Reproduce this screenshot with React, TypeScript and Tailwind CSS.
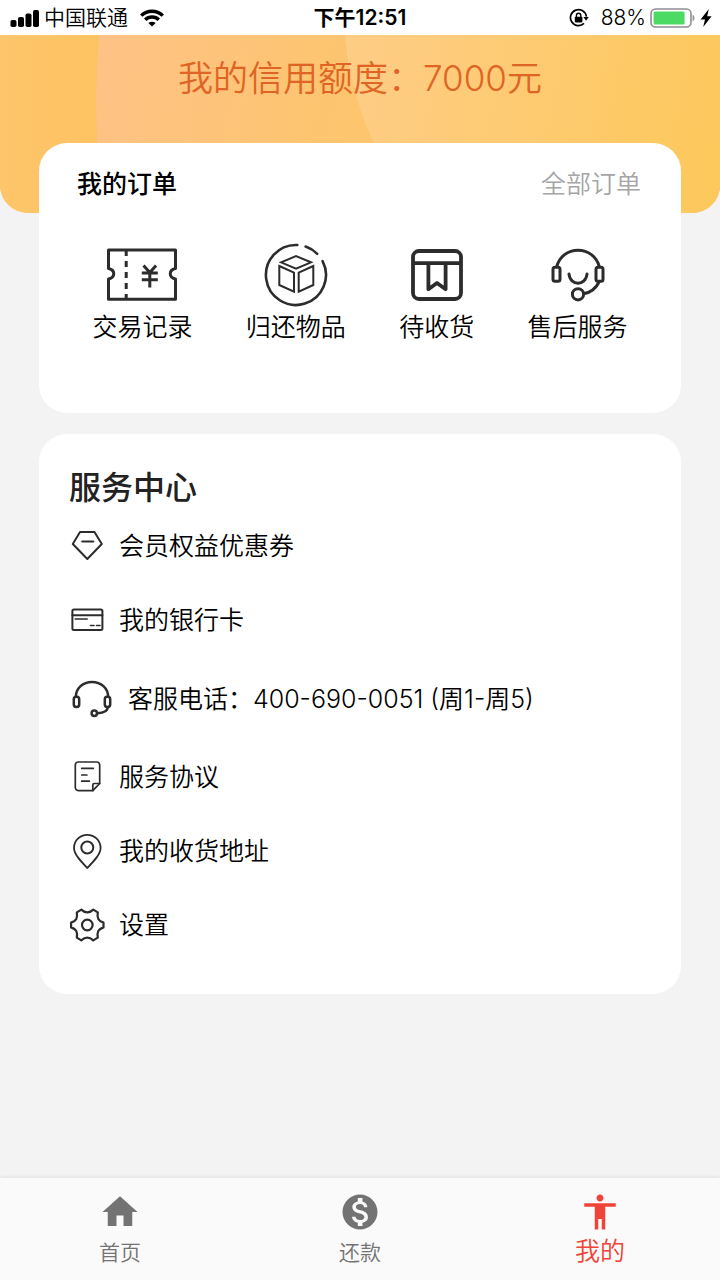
import type { ReactNode } from "react";
import { MdAccessibility, MdHome, MdMonetizationOn } from "react-icons/md";

const orders = [
    { label: "交易记录", icon: <TicketIcon /> },
    { label: "归还物品", icon: <ReturnIcon /> },
    { label: "待收货", icon: <ParcelIcon /> },
    { label: "售后服务", icon: <SupportIcon /> },
];

function StatusBar() {
    return (
        <div className="grid h-[35px] grid-cols-3 items-center bg-white px-2 text-[21px] text-black">
            <div className="flex items-center gap-1 pl-0.5">
                <svg viewBox="0 0 30 20" className="h-5 w-[30px]">
                    <rect x="0.5" y="12" width="6" height="7" rx="1.8" />
                    <rect x="8" y="9" width="6" height="10" rx="1.8" />
                    <rect x="15.5" y="5.5" width="6" height="13.5" rx="1.8" />
                    <rect x="23" y="2" width="6" height="17" rx="1.8" />
                </svg>
                <span className="whitespace-nowrap">中国联通</span>
                <svg viewBox="0 0 24 18" className="ml-2 h-[18px] w-6" fill="none" stroke="black" strokeWidth="3.4">
                    <path d="M1.2 6.6a15.4 15.4 0 0 1 21.6 0" />
                    <path d="M5.2 10.8a9.6 9.6 0 0 1 13.6 0" />
                    <path d="M12 17.6l-3.6-3.5a5.2 5.2 0 0 1 7.2 0z" fill="black" stroke="none" />
                </svg>
            </div>

            <div className="text-center font-semibold">下午12:51</div>

            <div className="flex items-center justify-end">
                <svg viewBox="0 0 20 20" className="mr-3 h-5 w-5" fill="none" stroke="black" strokeWidth="1.7">
                    <path d="M15 15.4A8 8 0 1 1 17.4 8.6" />
                    <path d="M14.4 9h5.4L17 12.8z" fill="black" stroke="none" />
                    <rect x="5.8" y="8.8" width="7.6" height="5.6" rx="0.8" fill="black" stroke="none" />
                    <path d="M7.4 9V7.4a2.2 2.2 0 0 1 4.4 0V9" strokeWidth="1.4" />
                </svg>
                <span>88%</span>
                <svg viewBox="0 0 46 20" className="ml-1 h-5 w-[46px]">
                    <rect x="1" y="1" width="40" height="18" rx="4.5" fill="none" stroke="#8e8e93" strokeWidth="1.6" />
                    <rect x="3.6" y="3.6" width="31" height="12.8" rx="1.5" fill="#4cd964" />
                    <path d="M42.6 6.6a4 4 0 0 1 0 6.8z" fill="#8e8e93" />
                </svg>
                <svg viewBox="0 0 12 20" className="ml-1 h-5 w-3">
                    <path d="M8.8 1L0.6 11.4h4.4L3.2 19 11.6 8.2H7.2z" />
                </svg>
            </div>
        </div>
    );
}

function CreditHeader() {
    return (
        <header className="relative overflow-hidden rounded-b-[28px] bg-[#fec467] pt-[18px] pb-[110px]">
            <svg
                viewBox="0 0 720 178"
                preserveAspectRatio="none"
                className="absolute inset-0 h-full w-full"
                aria-hidden="true"
            >
                <defs>
                    <linearGradient id="base" x1="0" x2="1">
                        <stop offset="0" stopColor="#fec56b" />
                        <stop offset="0.14" stopColor="#fdc261" />
                        <stop offset="1" stopColor="#fdc85c" />
                    </linearGradient>
                    <linearGradient id="back" gradientUnits="userSpaceOnUse" x1="95" x2="440" y1="40" y2="120">
                        <stop offset="0" stopColor="#fec285" />
                        <stop offset="1" stopColor="#fdc665" />
                    </linearGradient>
                    <linearGradient id="front" gradientUnits="userSpaceOnUse" x1="345" x2="720" y1="20" y2="90">
                        <stop offset="0" stopColor="#fecd86" />
                        <stop offset="1" stopColor="#fdc85c" />
                    </linearGradient>
                </defs>
                <rect width="720" height="178" fill="url(#base)" />
                <circle cx="795" cy="66" r="699" fill="url(#back)" />
                <circle cx="654" cy="-25" r="310" fill="url(#front)" />
            </svg>
            <h1 className="relative text-center text-[35px] leading-[50px] font-[350] text-[#e06424]">我的信用额度：7000元</h1>
        </header>
    );
}

function TicketIcon() {
    return (
        <svg viewBox="0 0 70 54" className="h-[54px] w-[70px]" fill="none" stroke="#2c2c2c" strokeWidth="3" strokeLinejoin="round">
            <path d="M1.5 2H68.5V20.5C61.5 22 61.5 29.5 68.5 31V51.3H1.5V31C8.5 29.5 8.5 22 1.5 20.5Z" />
            <path d="M19.2 3V51" strokeDasharray="6 5" strokeDashoffset="1" />
            <path d="M36.5 17.5l6.3 7 6.3-7M42.8 24.5V39.5M34.8 25h16M34.8 31.7h16" strokeLinejoin="miter" />
        </svg>
    );
}

function ReturnIcon() {
    return (
        <svg viewBox="0 0 64 64" className="h-16 w-16" fill="none" stroke="#2c2c2c" strokeWidth="2.6" strokeLinecap="round">
            <path d="M58.6 18.2A30 30 0 1 1 33.3 2" />
            <path d="M41.6 3.6A30 30 0 0 1 53.2 10.8" />
            <path d="M17 19.3L32 13l15 6.3-15 6.4z" strokeWidth="2" />
            <path d="M15.3 23L30 29.7v19L15.3 42z" strokeWidth="2" />
            <path d="M49.3 23L34.7 29.7v19L49.3 42z" strokeWidth="2" />
        </svg>
    );
}

function ParcelIcon() {
    return (
        <svg viewBox="0 0 54 54" className="h-[54px] w-[54px]" fill="none" stroke="#2c2c2c" strokeWidth="3.8" strokeLinejoin="round">
            <rect x="3" y="3" width="48" height="48" rx="6" />
            <path d="M3 15.2h48M18.4 15.2v26l8.6-6.2 8.6 6.2v-26" />
        </svg>
    );
}

function SupportIcon() {
    return (
        <svg viewBox="0 0 56 56" className="h-14 w-14" fill="none" stroke="#2c2c2c" strokeWidth="3" strokeLinecap="round">
            <path d="M6.8 19.5C9.5 9.5 17.8 3.2 28 3.2S46.5 9.5 49.2 19.5" />
            <rect x="3" y="20.3" width="7" height="14" rx="2" />
            <rect x="46" y="20.3" width="7" height="14" rx="2" />
            <path d="M19 27c1 12.2 17 12.2 18 0" />
            <path d="M49 35c-3 6.5-8.5 10.5-15.5 11.8" />
            <circle cx="28" cy="47.3" r="5.6" />
        </svg>
    );
}

function ListIcon({ children }: { children: ReactNode }) {
    return (
        <svg
            viewBox="0 0 36 36"
            className="h-9 w-9 shrink-0"
            fill="none"
            stroke="#2c2c2c"
            strokeWidth="2"
            strokeLinecap="round"
            strokeLinejoin="round"
        >
            {children}
        </svg>
    );
}

const services = [
    {
        label: "会员权益优惠券",
        href: "#coupons",
        icon: (
            <ListIcon>
                <path d="M11 3h14.5L32.8 15 18.3 30 3.8 15z" />
                <path d="M13.3 12.5h11" strokeWidth="2.2" />
            </ListIcon>
        ),
    },
    {
        label: "我的银行卡",
        href: "#cards",
        icon: (
            <ListIcon>
                <rect x="3.4" y="6.5" width="30" height="20.5" rx="1.5" />
                <path d="M3.4 12.2h30" />
                <path d="M6.2 16h12M21.5 22.5h3.5M27.5 22.5h3.5" strokeWidth="1.6" />
            </ListIcon>
        ),
    },
    {
        label: "客服电话：400-690-0051 (周1-周5)",
        href: "tel:400-690-0051",
        tall: true,
        icon: (
            <svg viewBox="0 0 45 44" className="h-11 w-[45px] shrink-0" fill="none" stroke="#2c2c2c" strokeWidth="2.5">
                <path d="M6.8 19.5C6.8 10 14 4 23 4S39.2 10 39.2 19.5" />
                <rect x="4.8" y="18.8" width="5.4" height="10.2" rx="2.4" />
                <rect x="35.8" y="18.8" width="5.4" height="10.2" rx="2.4" />
                <path d="M38.8 29c0 4-4 6-10.4 6.2" />
                <circle cx="25.3" cy="35.3" r="2.7" />
            </svg>
        ),
    },
    {
        label: "服务协议",
        href: "#agreement",
        icon: (
            <ListIcon>
                <path d="M30.7 23.5V5a3 3 0 0 0-3-3H9.3a3 3 0 0 0-3 3v22.6a3 3 0 0 0 3 3h14.5z" strokeWidth="1.7" />
                <path d="M23.8 30.6V25a1.5 1.5 0 0 1 1.5-1.5h5.4M12.7 8.4h11.6M12.7 15h5.2M12.7 21.2h7.6" strokeWidth="1.7" />
            </ListIcon>
        ),
    },
    {
        label: "我的收货地址",
        href: "#address",
        icon: (
            <ListIcon>
                <path d="M18.3 34C12 27.4 5 20.2 5 13.9a13.3 13 0 0 1 26.6 0C31.6 20.2 24.6 27.4 18.3 34z" strokeWidth="1.8" />
                <circle cx="18.3" cy="13.5" r="6" />
            </ListIcon>
        ),
    },
    {
        label: "设置",
        href: "#settings",
        icon: (
            <ListIcon>
                <g transform="translate(18.3 17)" strokeWidth="2.2">
                    <path d="M16.2-2.4V2.4C10.8 4.2 9.6 7 10.5 12.6L6 15.4C2 11.6-2 11.6-6 15.4L-10.5 12.6C-9.6 7-10.8 4.2-16.2 2.4V-2.4C-10.8-4.2-9.6-7-10.5-12.6L-6-15.4C-2-11.6 2-11.6 6-15.4L10.5-12.6C9.6-7 10.8-4.2 16.2-2.4Z" />
                    <circle r="5.3" />
                </g>
            </ListIcon>
        ),
    },
];

export default function App() {
    return (
        <div className="flex min-h-screen flex-col bg-[#f3f3f3] font-[Inter,'Noto_Sans_CJK_SC',sans-serif] font-[350] text-black">
            <StatusBar />
            <CreditHeader />

            <main className="relative -mt-[70px] flex flex-col gap-[21px] px-[39px] pb-8">
                <section className="rounded-[28px] bg-white pt-5 pb-[65px]">
                    <div className="flex items-center justify-between pr-10 pl-[38px] text-[25px] leading-[42px]">
                        <h2 className="font-medium">我的订单</h2>
                        <a href="#orders" className="text-[#a5a5a5]">全部订单</a>
                    </div>

                    <div className="mt-[38px] flex justify-evenly">
                        {orders.map((item) => (
                            <button key={item.label} className="flex flex-col items-center">
                                <span className="flex h-16 items-center">{item.icon}</span>
                                <span className="text-[25px] leading-[41px]">{item.label}</span>
                            </button>
                        ))}
                    </div>
                </section>

                <section className="rounded-[28px] bg-white px-[30px] pt-8 pb-[31px]">
                    <h2 className="text-[32px] leading-[44px] font-medium text-[#222]">服务中心</h2>
                    <ul>
                        {services.map((item) => (
                            <li key={item.label}>
                                <a
                                    href={item.href}
                                    className={`flex items-center gap-3.5 text-[25px] ${item.tall ? "h-[83px]" : "h-[74px]"}`}
                                >
                                    {item.icon}
                                    <span>{item.label}</span>
                                </a>
                            </li>
                        ))}
                    </ul>
                </section>
            </main>

            <nav className="sticky bottom-0 mt-auto grid grid-cols-3 bg-[#fafafa] pt-[13px] pb-[7px] text-[21px] leading-[40px] text-[#737373] shadow-[0_-1px_4px_rgba(0,0,0,0.08)]">
                <a href="#home" className="flex flex-col items-center">
                    <MdHome className="size-[42px]" />
                    首页
                </a>
                <a href="#repay" className="flex flex-col items-center">
                    <MdMonetizationOn className="size-[42px]" />
                    还款
                </a>
                <a href="#me" aria-current="page" className="flex flex-col items-center text-[25px] leading-[36px] text-[#f04438]">
                    <MdAccessibility className="size-[42px]" />
                    我的
                </a>
            </nav>
        </div>
    );
}
